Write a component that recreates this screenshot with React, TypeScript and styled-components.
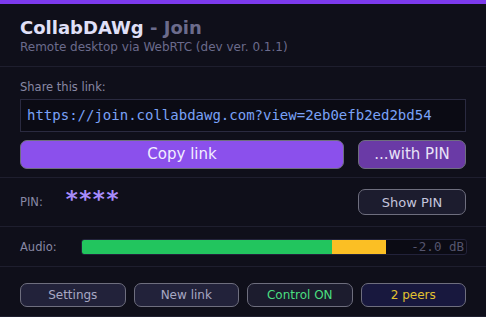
import React from "react";
import styled, { createGlobalStyle } from "styled-components";

const Global = createGlobalStyle`
  html, body { margin: 0; padding: 0; background: #0f0f1a; }
  body { font-family: "DejaVu Sans", "Liberation Sans", sans-serif; }
  * { box-sizing: border-box; }
`;

const Page = styled.div`
  width: 486px;
  height: 317px;
  background: #0f0f1a;
  display: flex;
  flex-direction: column;
  overflow: hidden;
`;

const TopBar = styled.div`
  height: 4px;
  background: #7c3aed;
`;

const Header = styled.header`
  padding: 13px 20px 0;
  height: 63px;
  border-bottom: 1px solid #1e1e2e;
`;

const Title = styled.h1`
  margin: 0;
  font-size: 18px;
  line-height: 22px;
  font-weight: bold;
  color: #e0e0f8;
`;

const Dim = styled.span`
  color: #6b6b8c;
`;

const Subtitle = styled.div`
  font-size: 12px;
  line-height: 16px;
  color: #6b6b8c;
`;

const Section = styled.section<{ $pad: string; $h: number }>`
  padding: ${(p) => p.$pad};
  height: ${(p) => p.$h}px;
  border-bottom: 1px solid #1e1e2e;
  display: flex;
  flex-direction: column;
`;

const Label = styled.div`
  font-size: 11.5px;
  line-height: 14px;
  color: #8888a4;
`;

const UrlBox = styled.div`
  margin-top: 5px;
  height: 33px;
  border: 1px solid #2a2a40;
  background: #0b0b14;
  padding: 0 6px;
  display: flex;
  align-items: center;
  font-family: "DejaVu Sans Mono", monospace;
  font-size: 14px;
  color: #7aa2f7;
  white-space: nowrap;
`;

const ButtonRow = styled.div`
  margin-top: 8px;
  display: flex;
  gap: 14px;
`;

const Btn = styled.button<{ $bg: string; $fg: string; $h: number; $size: number }>`
  height: ${(p) => p.$h}px;
  background: ${(p) => p.$bg};
  color: ${(p) => p.$fg};
  border: 1px solid #6e6e7e;
  border-radius: 7px;
  font-family: inherit;
  font-size: ${(p) => p.$size}px;
  padding: 0;
  display: flex;
  align-items: center;
  justify-content: center;
`;

const Row = styled.div`
  display: flex;
  align-items: center;
  height: 100%;
`;

const Stars = styled.span`
  margin-left: 23px;
  font-size: 23px;
  font-weight: bold;
  color: #a78bfa;
  letter-spacing: 1.5px;
  align-self: flex-start;
  margin-top: 8px;
`;

const Spacer = styled.div`
  flex: 1;
`;

const Meter = styled.div`
  margin-left: 24px;
  flex: 1;
  height: 16px;
  border: 1px solid #22223a;
  border-radius: 3px;
  background: #0b0b14;
  position: relative;
  display: flex;
  overflow: hidden;
`;

const Seg = styled.div<{ $c: string }>`
  background: ${(p) => p.$c};
  height: 100%;
`;

const Db = styled.span`
  position: absolute;
  right: 2px;
  top: 0;
  line-height: 14px;
  font-family: "DejaVu Sans Mono", monospace;
  font-size: 12.5px;
  color: #55556e;
`;

const Grid = styled.div`
  display: grid;
  grid-template-columns: repeat(4, 1fr);
  gap: 8px;
`;

export default function App() {
  return (
    <Page>
      <Global />
      <TopBar />
      <Header>
        <Title>
          CollabDAWg <Dim>- Join</Dim>
        </Title>
        <Subtitle>Remote desktop via WebRTC (dev ver. 0.1.1)</Subtitle>
      </Header>
      <Section $pad="13px 20px 0" $h={112}>
        <Label>Share this link:</Label>
        <UrlBox>https://join.collabdawg.com?view=2eb0efb2ed2bd54</UrlBox>
        <ButtonRow>
          <Btn $bg="#8b50ec" $fg="#f2eeff" $h={29} $size={15} style={{ flex: 1 }}>
            Copy link
          </Btn>
          <Btn $bg="#6a3aa6" $fg="#e8e2f8" $h={29} $size={15} style={{ width: 108 }}>
            ...with PIN
          </Btn>
        </ButtonRow>
      </Section>
      <Section $pad="0 20px" $h={49}>
        <Row>
          <Label>PIN:</Label>
          <Stars>****</Stars>
          <Spacer />
          <Btn $bg="#1c1c2e" $fg="#c4c4dc" $h={26} $size={13} style={{ width: 108 }}>
            Show PIN
          </Btn>
        </Row>
      </Section>
      <Section $pad="0 19px 0 20px" $h={40}>
        <Row>
          <Label>Audio:</Label>
          <Meter>
            <Seg $c="#22c55e" style={{ width: 250 }} />
            <Seg $c="#fbbf24" style={{ width: 54 }} />
            <Db>-2.0 dB</Db>
          </Meter>
        </Row>
      </Section>
      <Section $pad="16px 20px 0" $h={50}>
        <Grid>
          <Btn $bg="#22223a" $fg="#a8a8c4" $h={24} $size={12}>Settings</Btn>
          <Btn $bg="#22223a" $fg="#a8a8c4" $h={24} $size={12}>New link</Btn>
          <Btn $bg="#1c1c2e" $fg="#4ade80" $h={24} $size={12}>Control ON</Btn>
          <Btn $bg="#18183e" $fg="#e2c230" $h={24} $size={12}>2 peers</Btn>
        </Grid>
      </Section>
    </Page>
  );
}
